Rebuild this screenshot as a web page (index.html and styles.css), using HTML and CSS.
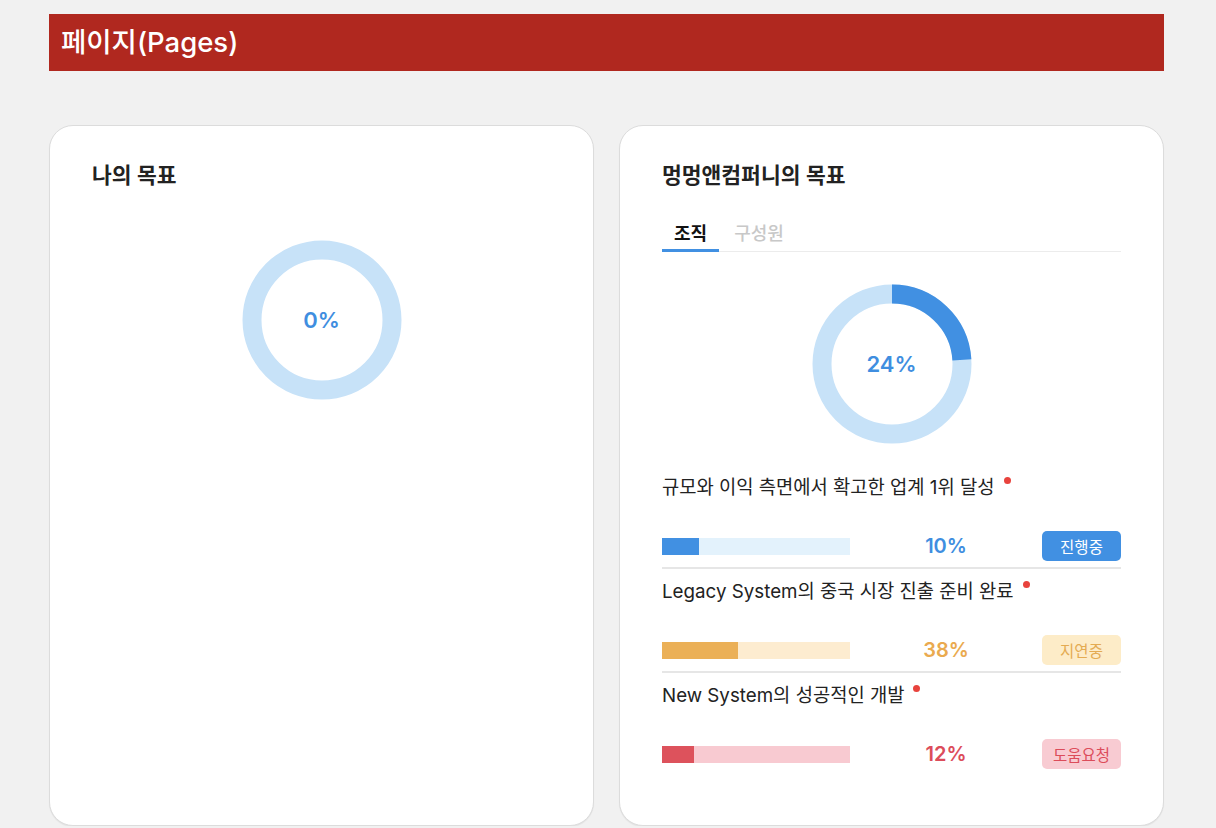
FILE: index.html
```html
<!DOCTYPE html>
<html lang="ko">
<head>
<meta charset="utf-8">
<title>페이지(Pages)</title>
<link rel="stylesheet" href="styles.css">
</head>
<body>
<div class="page">
  <header class="topbar"><h1>페이지(Pages)</h1></header>
  <main class="cards">
    <section class="card">
      <h2 class="card-title">나의 목표</h2>
      <div class="donut donut-left">
        <svg width="160" height="160" viewBox="0 0 160 160">
          <circle cx="80" cy="80" r="70" fill="none" stroke="#c7e2f8" stroke-width="19"/>
        </svg>
        <span class="donut-label">0%</span>
      </div>
    </section>
    <section class="card">
      <h2 class="card-title">멍멍앤컴퍼니의 목표</h2>
      <div class="tabs">
        <span class="tab active">조직</span>
        <span class="tab">구성원</span>
      </div>
      <div class="donut donut-right">
        <svg width="160" height="160" viewBox="0 0 160 160">
          <circle cx="80" cy="80" r="70" fill="none" stroke="#c7e2f8" stroke-width="19"/>
          <circle cx="80" cy="80" r="70" fill="none" stroke="#4190e2" stroke-width="19" stroke-dasharray="105.56 334.26" transform="rotate(-90 80 80)"/>
        </svg>
        <span class="donut-label">24%</span>
      </div>
      <ul class="goals">
        <li class="goal">
          <div class="goal-title">규모와 이익 측면에서 확고한 업계 1위 달성<span class="dot"></span></div>
          <div class="goal-row">
            <div class="bar bar-blue"><div class="fill" style="width:37px"></div></div>
            <span class="pct pct-blue">10%</span>
            <span class="badge badge-blue">진행중</span>
          </div>
        </li>
        <li class="goal">
          <div class="goal-title">Legacy System의 중국 시장 진출 준비 완료<span class="dot"></span></div>
          <div class="goal-row">
            <div class="bar bar-orange"><div class="fill" style="width:76px"></div></div>
            <span class="pct pct-orange">38%</span>
            <span class="badge badge-orange">지연중</span>
          </div>
        </li>
        <li class="goal">
          <div class="goal-title">New System의 성공적인 개발<span class="dot"></span></div>
          <div class="goal-row">
            <div class="bar bar-red"><div class="fill" style="width:32px"></div></div>
            <span class="pct pct-red">12%</span>
            <span class="badge badge-red">도움요청</span>
          </div>
        </li>
      </ul>
    </section>
  </main>
</div>
</body>
</html>
```

FILE: styles.css
```css
* { box-sizing: border-box; }
html, body { margin: 0; padding: 0; }
body {
  background: #f1f1f1;
  font-family: Inter, "Noto Sans CJK KR", sans-serif;
  color: #222;
}
.page {
  width: 1115px;
  margin-left: 49px;
  padding-top: 14px;
}
.topbar {
  height: 57px;
  background: #b0281f;
  display: flex;
  align-items: center;
  padding-left: 12px;
}
.topbar h1 {
  margin: 0;
  color: #fff;
  font-size: 27.5px;
  font-weight: 500;
  line-height: 1;
}
.cards {
  margin-top: 54px;
  display: grid;
  grid-template-columns: 1fr 1fr;
  gap: 25px;
}
.card {
  background: #fff;
  border: 1px solid #dcdcdc;
  border-radius: 24px;
  height: 701px;
  padding: 35px 42px 0;
  box-shadow: 0 1px 1px rgba(0,0,0,0.06);
  display: flex;
  flex-direction: column;
}
.card-title {
  margin: 0;
  font-size: 21.5px;
  line-height: 28px;
  font-weight: 600;
  color: #222;
}
.donut {
  position: relative;
  width: 160px;
  height: 160px;
  align-self: center;
}
.donut svg { display: block; }
.donut-left { margin-top: 51px; }
.donut-right { margin-top: 32px; }
.donut-label {
  position: absolute;
  inset: 0;
  display: flex;
  align-items: center;
  justify-content: center;
  font-size: 22px;
  font-weight: 600;
  color: #3f8ee0;
}
.tabs {
  margin-top: 33px;
  display: flex;
  border-bottom: 1px solid #ececec;
}
.tab {
  font-size: 18px;
  line-height: 24px;
  padding: 0 12px 3px;
  color: #c8c8c8;
  font-weight: 500;
  border-bottom: 3px solid transparent;
  margin-bottom: -1px;
  margin-right: 3px;
}
.tab.active {
  color: #111;
  font-weight: 700;
  border-bottom-color: #4190e2;
}
.goals {
  list-style: none;
  margin: 32px 0 0;
  padding: 0;
}
.goal {
  padding: 0 0 6px;
  border-bottom: 2px solid #e6e6e6;
}
.goal + .goal { padding-top: 11px; }
.goal:last-child { border-bottom: none; }
.goal-title {
  font-size: 18.75px;
  line-height: 24px;
  color: #222;
  display: flex;
  align-items: flex-start;
}
.dot {
  width: 7px;
  height: 7px;
  border-radius: 50%;
  background: #e8433d;
  margin-left: 9px;
  margin-top: 1px;
  flex: none;
}
.goal-row {
  margin-top: 31px;
  height: 30px;
  display: flex;
  align-items: center;
}
.bar {
  width: 188px;
  height: 17px;
  flex: none;
}
.bar .fill { height: 100%; }
.bar-blue { background: #e3f2fc; }
.bar-blue .fill { background: #4190e2; }
.bar-orange { background: #fdecd0; }
.bar-orange .fill { background: #ebb057; }
.bar-red { background: #f8cad1; }
.bar-red .fill { background: #dd525c; }
.pct {
  flex: 1;
  text-align: center;
  font-size: 20px;
  font-weight: 600;
}
.pct-blue { color: #3f8ee0; }
.pct-orange { color: #eaaa4f; }
.pct-red { color: #dc4c5a; }
.badge {
  width: 79px;
  height: 30px;
  border-radius: 5px;
  display: flex;
  align-items: center;
  justify-content: center;
  font-size: 15.5px;
  flex: none;
}
.badge-blue { background: #4190e2; color: #fff; }
.badge-orange { background: #fdecc8; color: #e4ab52; }
.badge-red { background: #f8cbd2; color: #dc4c5a; }
```
